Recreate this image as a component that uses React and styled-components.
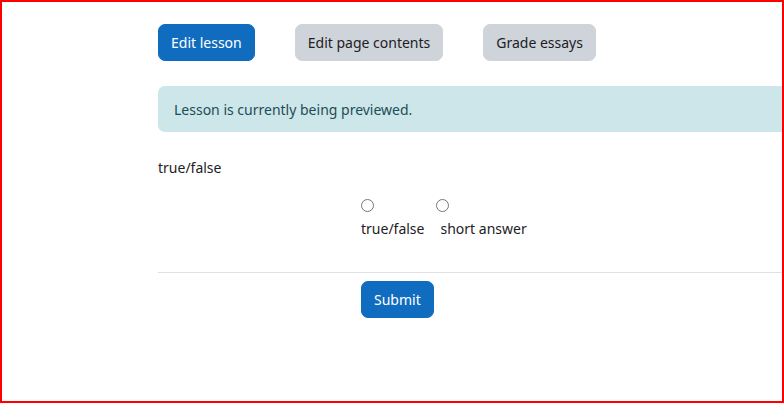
import styled, { createGlobalStyle } from "styled-components";

const GlobalStyle = createGlobalStyle`
  html, body {
    margin: 0;
    padding: 0;
    background: #fff;
  }
  body {
    font-family: "Noto Sans", "Liberation Sans", sans-serif;
    font-size: 14px;
    line-height: 22.5px;
    color: #1d2125;
  }
`;

const Frame = styled.div`
  box-sizing: border-box;
  width: 784px;
  height: 403px;
  border: 2px solid #ff0000;
  overflow: hidden;
  padding: 22px 0 0 156px;
`;

const Page = styled.div`
  width: 760px;
`;

const ActionBar = styled.div`
  display: flex;
  gap: 40px;
  margin-bottom: 25px;
`;

const Button = styled.button`
  font-family: inherit;
  font-size: 14px;
  line-height: 22.5px;
  padding: 7px 12px 5px;
  border: 1px solid ${(p) => (p.$primary ? "#0f6cbf" : "#ced4da")};
  border-radius: 7px;
  background: ${(p) => (p.$primary ? "#0f6cbf" : "#ced4da")};
  color: ${(p) => (p.$primary ? "#fff" : "#1d2125")};
  cursor: pointer;
`;

const Alert = styled.div`
  background: #cce6ea;
  color: #1d4d55;
  border-radius: 7px;
  padding: 13px 16px 11px;
  margin-bottom: 25px;
`;

const Question = styled.div`
  margin-bottom: 16px;
`;

const Options = styled.div`
  display: flex;
  gap: 12px;
  padding-left: 203px;
  padding-bottom: 32px;
  border-bottom: 1px solid #dee2e6;
`;

const Option = styled.label`
  display: flex;
  flex-direction: column;
  align-items: flex-start;
`;

const Radio = styled.input`
  width: 13px;
  height: 13px;
  margin: 3px 0 6px 0;
`;

const OptionText = styled.span`
  padding-left: ${(p) => p.$indent || 0}px;
`;

const Footer = styled.div`
  padding: 8px 0 0 203px;
`;

const options = [
  { id: "tf", text: "true/false", indent: 0 },
  { id: "sa", text: "short answer", indent: 4 },
];

export default function App() {
  return (
    <>
      <GlobalStyle />
      <Frame>
        <Page>
          <ActionBar>
            <Button $primary>Edit lesson</Button>
            <Button>Edit page contents</Button>
            <Button>Grade essays</Button>
          </ActionBar>
          <Alert>Lesson is currently being previewed.</Alert>
          <Question>true/false</Question>
          <Options>
            {options.map((o) => (
              <Option key={o.id}>
                <Radio type="radio" name="answer" />
                <OptionText $indent={o.indent}>{o.text}</OptionText>
              </Option>
            ))}
          </Options>
          <Footer>
            <Button $primary>Submit</Button>
          </Footer>
        </Page>
      </Frame>
    </>
  );
}
